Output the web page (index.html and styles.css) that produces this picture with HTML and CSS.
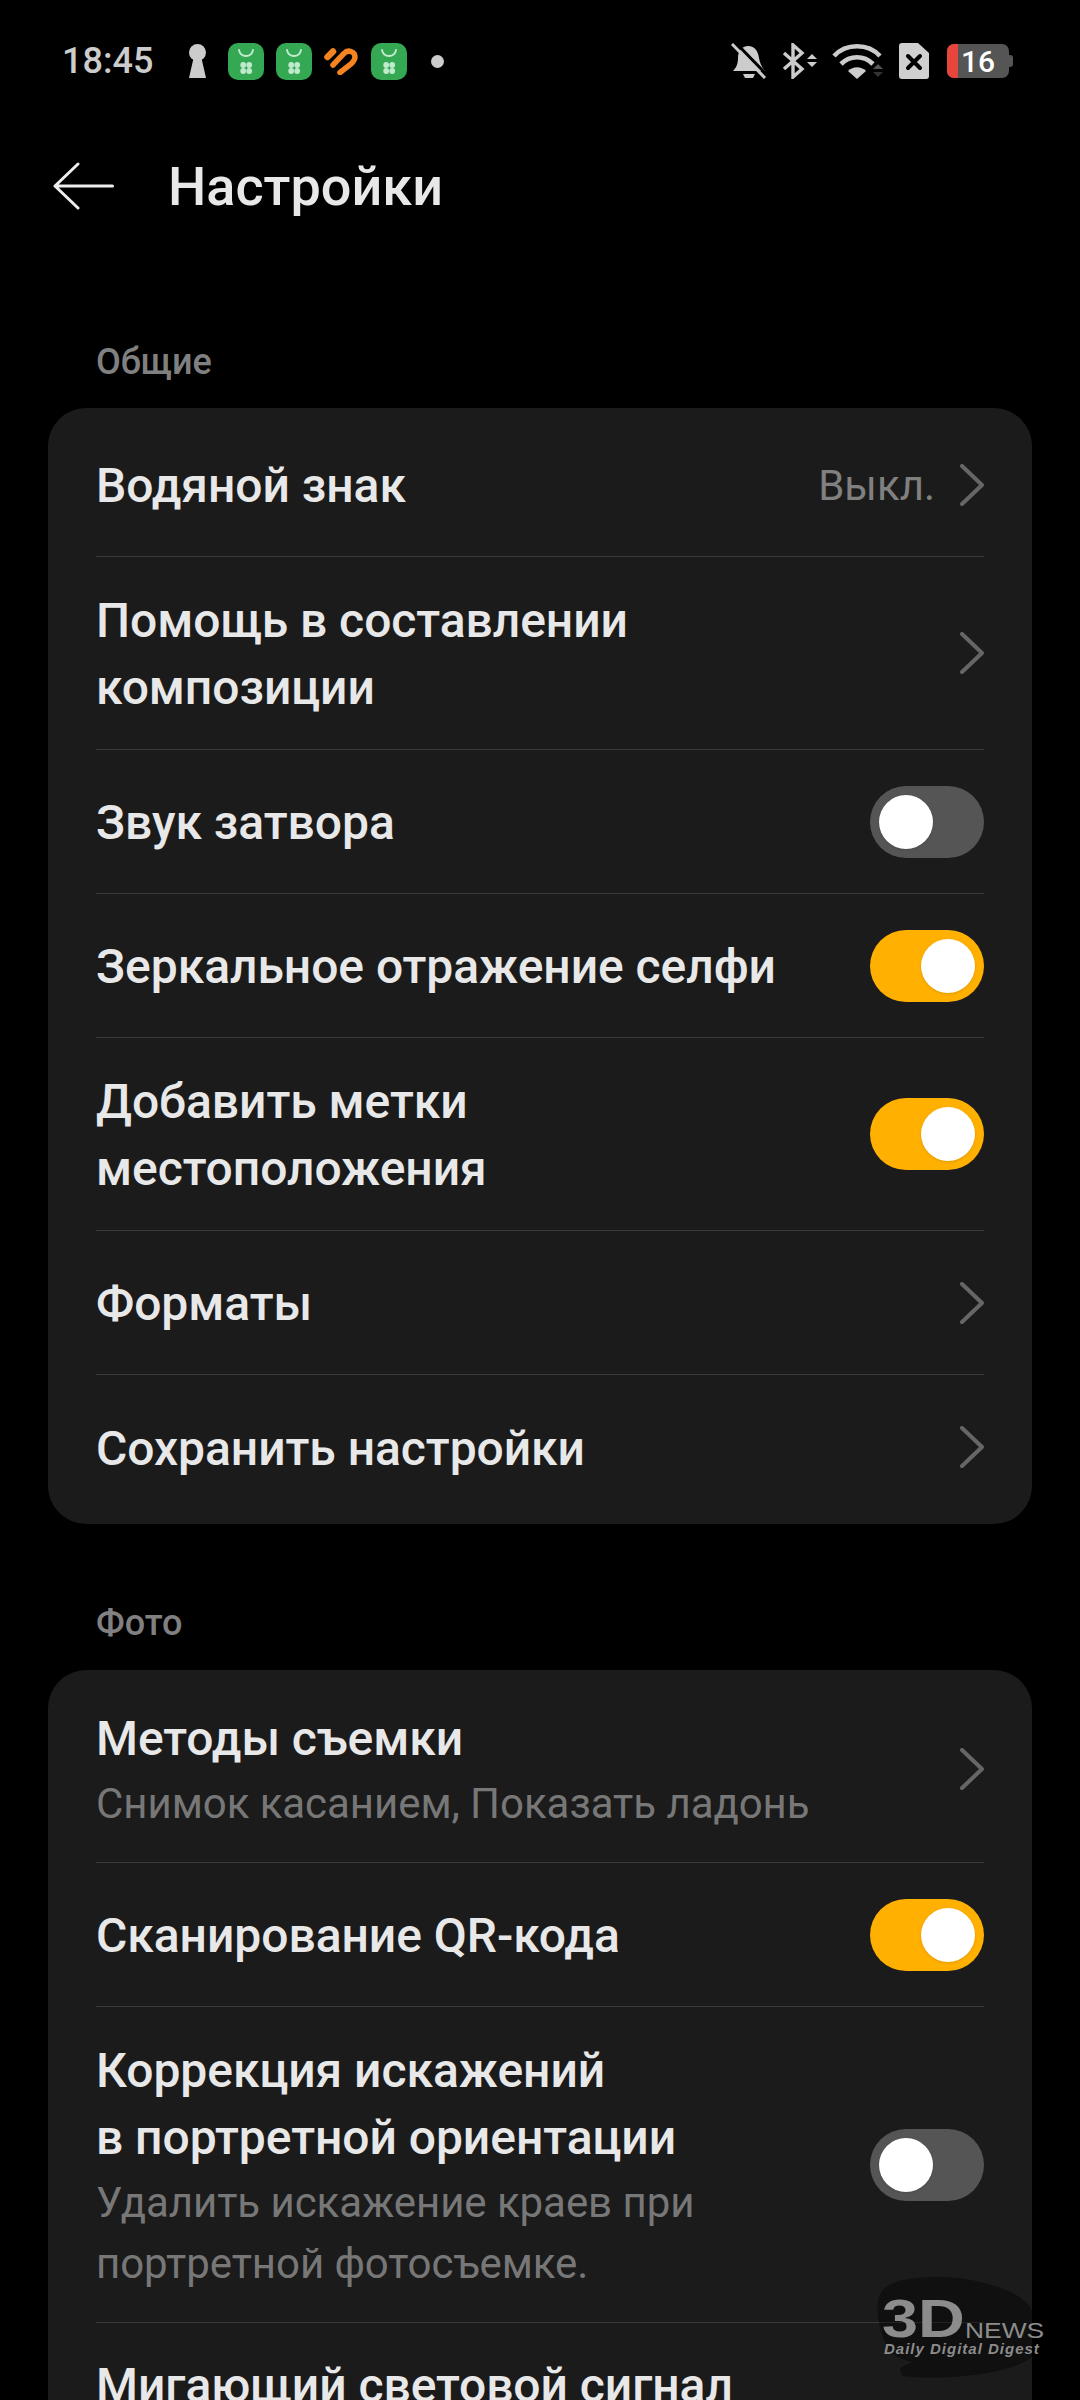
FILE: index.html
```html
<!DOCTYPE html>
<html lang="ru">
<head>
    <meta charset="UTF-8">
    <meta name="viewport" content="width=device-width, initial-scale=1.0">
    <title>Настройки</title>
    <link rel="stylesheet" href="styles.css">
</head>
<body>
    <div class="status-bar">
        <div class="status-left">
            <span class="time">18:45</span>
            <svg class="ic-key" viewBox="0 0 19 34"><circle cx="9.5" cy="8.5" r="8.5" fill="#ccc"/><path d="M6 12h7l5 22H1z" fill="#ccc"/></svg>
            <svg class="ic-app" viewBox="0 0 36 37"><use href="#store"/></svg>
            <svg class="ic-app" viewBox="0 0 36 37"><use href="#store"/></svg>
            <svg class="ic-heart" viewBox="0 0 34 28"><path d="M3.5 10 L9 4.5" fill="none" stroke="#f5831f" stroke-width="6.5" stroke-linecap="round"/><path d="M9 18 L20 6.5 C24 2 31 4.5 31 10 C31 13 29 15 27 17 L16 25.5" fill="none" stroke="#f5831f" stroke-width="5.5" stroke-linecap="round"/></svg>
            <svg class="ic-app" viewBox="0 0 36 37">
                <defs>
                    <g id="store">
                        <rect width="36" height="37" rx="10" fill="#35a853"/>
                        <path d="M11 7c1.500 8 12.500 8 14 0" fill="none" stroke="#c5eccf" stroke-width="1.800" stroke-linecap="round"/>
                        <g fill="#bfeacb"><circle cx="15.200" cy="22" r="2.900"/><circle cx="21.200" cy="22" r="2.900"/><circle cx="15.200" cy="28" r="2.900"/><circle cx="21.200" cy="28" r="2.900"/></g>
                    </g>
                </defs>
                <use href="#store"/>
            </svg>
            <span class="dot"></span>
        </div>
        <div class="status-right">
            <svg class="ic-bell" viewBox="0 0 36 36"><path d="M17 3c7 0 10 5 11 12 1 6 3 9 6 13H2c3-3 5-7 5-13 0-7 4-12 10-12z" fill="#ccc"/><path d="M12 31h12l-2 4h-8z" fill="#ccc"/><path d="M3 -2 L36 32" stroke="#000" stroke-width="3"/><path d="M1 1 L34 35" stroke="#ccc" stroke-width="3"/></svg>
            <svg class="ic-bt" viewBox="0 0 36 36"><path d="M2 10 L20 26 L11 34 V2 L20 10 L2 26" fill="none" stroke="#ccc" stroke-width="3.400"/><path d="M25 16l5-5 5 5zM25 19h10l-5 5z" fill="#ccc"/></svg>
            <svg class="ic-wifi" viewBox="0 0 52 36"><g fill="none" stroke="#ccc" stroke-width="4.600"><path d="M2 13C14 0 36 0 48 13"/><path d="M9 21C18 12 32 12 41 21"/></g><path d="M16 28c5-5 13-5 18 0l-9 8z" fill="#ccc"/><path d="M41 26l5-5 5 5z" fill="#555"/><path d="M41 29h10l-5 5z" fill="#333"/></svg>
            <svg class="ic-sim" viewBox="0 0 30 36"><path d="M3 0h16l11 10v23a3 3 0 0 1-3 3H3a3 3 0 0 1-3-3V3a3 3 0 0 1 3-3z" fill="#d0d0d0"/><path d="M9 13 L21 25 M21 13 L9 25" stroke="#000" stroke-width="4" stroke-linecap="round"/></svg>
            <div class="battery">
                <span class="battery-level"></span>
                <span class="battery-num">16</span>
                <span class="battery-tip"></span>
            </div>
        </div>
    </div>

    <div class="title-bar">
        <svg class="back" viewBox="0 0 61 48"><path d="M59.500 24H2M25 2 L2 24 L25 46" fill="none" stroke="#eee" stroke-width="3" stroke-linecap="round" stroke-linejoin="round"/></svg>
        <h1>Настройки</h1>
    </div>

    <div class="section-title first">Общие</div>
    <div class="card">
        <div class="row">
            <div class="row-text">Водяной знак</div>
            <span class="value">Выкл.</span>
            <svg class="chevron" viewBox="0 0 24 42"><path d="M2 2 L22 21 L2 40"/></svg>
        </div>
        <div class="row">
            <div class="row-text">Помощь в составлении<br>композиции</div>
            <svg class="chevron" viewBox="0 0 24 42"><path d="M2 2 L22 21 L2 40"/></svg>
        </div>
        <div class="row">
            <div class="row-text">Звук затвора</div>
            <span class="switch"></span>
        </div>
        <div class="row">
            <div class="row-text">Зеркальное отражение селфи</div>
            <span class="switch on"></span>
        </div>
        <div class="row">
            <div class="row-text">Добавить метки<br>местоположения</div>
            <span class="switch on"></span>
        </div>
        <div class="row">
            <div class="row-text">Форматы</div>
            <svg class="chevron" viewBox="0 0 24 42"><path d="M2 2 L22 21 L2 40"/></svg>
        </div>
        <div class="row">
            <div class="row-text">Сохранить настройки</div>
            <svg class="chevron" viewBox="0 0 24 42"><path d="M2 2 L22 21 L2 40"/></svg>
        </div>
    </div>

    <div class="section-title">Фото</div>
    <div class="card">
        <div class="row">
            <div class="row-text">Методы съемки<div class="sub">Снимок касанием, Показать ладонь</div></div>
            <svg class="chevron" viewBox="0 0 24 42"><path d="M2 2 L22 21 L2 40"/></svg>
        </div>
        <div class="row">
            <div class="row-text">Сканирование QR-кода</div>
            <span class="switch on"></span>
        </div>
        <div class="row">
            <div class="row-text">Коррекция искажений<br>в портретной ориентации<div class="sub">Удалить искажение краев при<br>портретной фотосъемке.</div></div>
            <span class="switch"></span>
        </div>
        <div class="row tall">
            <div class="row-text">Мигающий световой сигнал</div>
        </div>
    </div>

    <div class="watermark">
        <svg class="brush" viewBox="0 0 170 105"><path d="M6 26C8 14 18 8 30 5c30-5 60-4 90 5 20 6 35 14 40 26v46c-10 8-30 14-50 17-30 4-56 5-80 2l-2-8 12-6c-16-4-24-10-28-22C8 54 4 40 6 26z" fill="#000" fill-opacity="0.4"/></svg>
        <span class="logo-3d">3D</span>
        <span class="logo-news">NEWS</span>
        <span class="logo-tag">Daily Digital Digest</span>
    </div>
</body>
</html>
```

FILE: styles.css
```css
html, body {
    margin: 0;
    height: 2400px;
    overflow: hidden;
}
body {
    position: relative;
    background-color: #000;
    color: #e8e8e8;
    font-family: 'Roboto', 'Noto Sans', sans-serif;
}
.status-bar {
    height: 122px;
    padding: 0 67px 0 62px;
    display: flex;
    justify-content: space-between;
    align-items: center;
}
.status-left, .status-right {
    display: flex;
    align-items: center;
}
.time {
    font-size: 36px;
    font-weight: 500;
    color: #ccc;
    margin-right: 35px;
}
.ic-key { width: 19px; height: 34px; margin-right: 21px; }
.ic-app { width: 36px; height: 37px; margin-right: 12px; }
.ic-heart { width: 34px; height: 28px; margin-right: 13px; }
.dot {
    width: 13px;
    height: 13px;
    margin-left: 12px;
    border-radius: 50%;
    background-color: #ccc;
}
.ic-bell { width: 36px; height: 36px; margin-right: 15px; }
.ic-bt { width: 36px; height: 36px; margin-right: 14px; }
.ic-wifi { width: 52px; height: 36px; margin-right: 15px; }
.ic-sim { width: 30px; height: 36px; margin-right: 18px; }
.battery {
    position: relative;
    width: 62px;
    height: 34px;
    margin-right: 4px;
    background-color: #555;
    border-radius: 7px;
    display: flex;
    align-items: center;
    justify-content: flex-end;
}
.battery-level {
    position: absolute;
    left: 0;
    top: 0;
    bottom: 0;
    width: 11px;
    background-color: #e8453c;
    border-radius: 7px 0 0 7px;
}
.battery-num {
    font-size: 30px;
    font-weight: 500;
    color: #fff;
    margin-right: 14px;
}
.battery-tip {
    position: absolute;
    right: -4px;
    top: 11px;
    width: 4px;
    height: 12px;
    background-color: #555;
    border-radius: 0 3px 3px 0;
}
.title-bar {
    height: 128px;
    padding-left: 53px;
    display: flex;
    align-items: center;
}
.back { width: 61px; height: 48px; margin-right: 54px; }
h1 {
    margin: 0;
    font-size: 54px;
    font-weight: 500;
    color: #e8e8e8;
}
.section-title {
    padding: 79px 96px 27px;
    font-size: 36px;
    line-height: 40px;
    font-weight: 500;
    color: #808080;
}
.section-title.first {
    padding-top: 92px;
    padding-bottom: 26px;
}
.card {
    margin: 0 48px;
    padding: 5px 48px;
    background-color: #1b1b1b;
    border-radius: 38px;
}
.row {
    min-height: 144px;
    padding: 29px 0;
    box-sizing: border-box;
    display: flex;
    align-items: center;
    border-bottom: 1px solid #3a3a3a;
}
.row:last-child { border-bottom: none; }
.row.tall {
    min-height: 190px;
    align-items: flex-start;
}
.row-text {
    flex: 1;
    margin: 1px 0 -1px;
    font-size: 48px;
    line-height: 67px;
    font-weight: 500;
    letter-spacing: -0.05px;
    color: #e8e8e8;
}
.row.tall .row-text { margin-top: 0; }
.sub {
    margin-top: 1px;
    font-size: 42px;
    line-height: 61px;
    font-weight: 400;
    letter-spacing: -0.05px;
    color: #777;
}
.value {
    margin: 1px 25px -1px 0;
    font-size: 42px;
    color: #808080;
}
.chevron {
    width: 24px;
    height: 42px;
    fill: none;
    stroke: #666;
    stroke-width: 4;
    stroke-linecap: round;
    stroke-linejoin: round;
}
.switch {
    position: relative;
    flex: none;
    width: 114px;
    height: 72px;
    border-radius: 36px;
    background-color: #555;
}
.switch::after {
    content: "";
    position: absolute;
    top: 9px;
    left: 9px;
    width: 54px;
    height: 54px;
    border-radius: 50%;
    background-color: #fff;
    box-shadow: 0 1px 3px rgba(0,0,0,0.12);
}
.switch.on { background-color: #ffb000; }
.switch.on::after { left: 51px; }
.watermark {
    position: absolute;
    left: 872px;
    top: 2275px;
    width: 178px;
    height: 105px;
    color: #8c8c8c;
    font-family: 'Liberation Sans', sans-serif;
    font-weight: 700;
    white-space: nowrap;
}
.brush {
    position: absolute;
    left: 0;
    top: 0;
    width: 170px;
    height: 105px;
}
.logo-3d {
    position: absolute;
    left: 10px;
    top: 23px;
    font-size: 54px;
    line-height: 40px;
    transform: scaleX(1.2);
    transform-origin: left top;
}
.logo-news {
    position: absolute;
    left: 93px;
    top: 46px;
    font-size: 22px;
    line-height: 20px;
    font-weight: 400;
    transform: scaleX(1.200);
    transform-origin: left top;
}
.logo-tag {
    position: absolute;
    left: 12px;
    top: 65px;
    font-size: 15px;
    line-height: 18px;
    font-style: italic;
    letter-spacing: 1px;
}
```
